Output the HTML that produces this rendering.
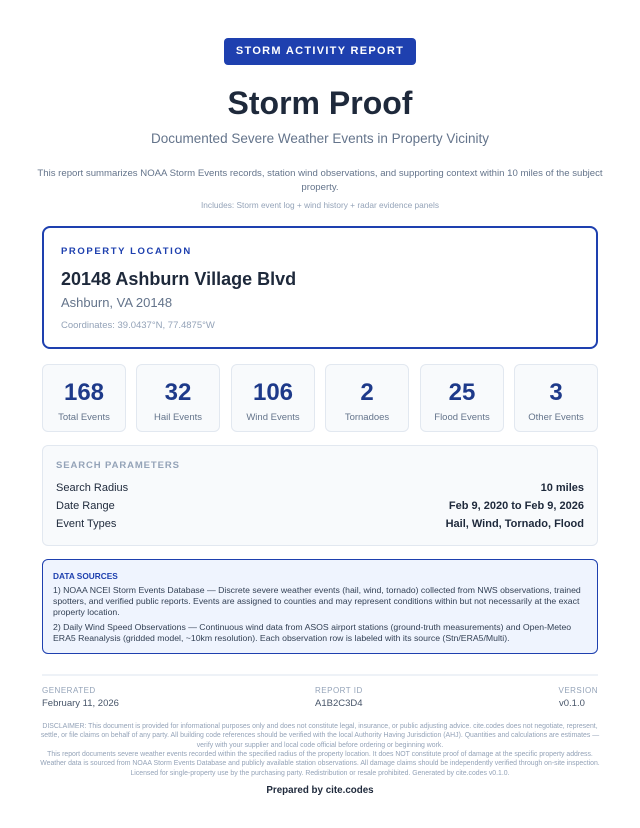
<!DOCTYPE html>
<html><head><meta charset="utf-8"><style>
*{margin:0;padding:0;box-sizing:border-box}
body{width:640px;height:828px;background:#fff;font-family:"Liberation Sans",sans-serif;position:relative;overflow:hidden;color:#1e293b}
.a{position:absolute}
.c{left:0;right:0;text-align:center}
.badge{left:224px;top:38px;width:192px;height:27px;background:#1e40af;border-radius:4px;color:#fff;font-weight:bold;font-size:11px;letter-spacing:1.3px;text-align:center;line-height:27px}
.prop{left:42px;top:226px;width:556px;height:123px;border:2px solid #1e40af;border-radius:8px}
.card{top:364px;width:84px;height:68px;border:1px solid #e2e8f0;border-radius:6px;background:#f8fafc;text-align:center}
.card b{display:block;font-size:24px;color:#1e3a8a;margin-top:14px;line-height:28px}
.card span{display:block;font-size:9.5px;color:#64748b;margin-top:5px}
.sp{left:42px;top:445px;width:556px;height:101px;border:1px solid #e2e8f0;border-radius:6px;background:#f8fafc}
.row{position:absolute;left:13px;right:13px;font-size:11px;color:#1e293b}
.row b{float:right}
.ds{left:42px;top:559px;width:556px;height:95px;border:1px solid #1e40af;border-radius:6px;background:#eff4fe;padding:11px 10px;font-size:8.7px;line-height:11px;color:#334155}
.fl{font-size:8px;color:#94a3b8;letter-spacing:.5px}
.fv{font-size:9.5px;color:#475569}
.dis{font-size:6.9px;color:#94a3b8;line-height:9.3px;text-align:center}
</style></head><body>
<div class="a badge">STORM ACTIVITY REPORT</div>
<div class="a c" style="top:85px;font-size:32px;font-weight:bold;color:#1e293b">Storm Proof</div>
<div class="a c" style="top:131px;font-size:13.5px;color:#64748b">Documented Severe Weather Events in Property Vicinity</div>
<div class="a c" style="top:167px;font-size:9.6px;color:#64748b;line-height:13.5px;padding:0 30px">This report summarizes NOAA Storm Events records, station wind observations, and supporting context within 10 miles of the subject property.</div>
<div class="a c" style="top:200px;font-size:8.3px;color:#94a3b8">Includes: Storm event log + wind history + radar evidence panels</div>
<div class="a prop">
 <div class="a" style="left:17px;top:18px;font-size:9.5px;font-weight:bold;color:#1e40af;letter-spacing:1.6px">PROPERTY LOCATION</div>
 <div class="a" style="left:17px;top:41px;font-size:18px;font-weight:bold;color:#1e293b">20148 Ashburn Village Blvd</div>
 <div class="a" style="left:17px;top:67px;font-size:13px;color:#64748b">Ashburn, VA 20148</div>
 <div class="a" style="left:17px;top:92px;font-size:9.5px;color:#94a3b8">Coordinates: 39.0437°N, 77.4875°W</div>
</div>
<div class="a card" style="left:42px"><b>168</b><span>Total Events</span></div>
<div class="a card" style="left:136px"><b>32</b><span>Hail Events</span></div>
<div class="a card" style="left:231px"><b>106</b><span>Wind Events</span></div>
<div class="a card" style="left:325px"><b>2</b><span>Tornadoes</span></div>
<div class="a card" style="left:420px"><b>25</b><span>Flood Events</span></div>
<div class="a card" style="left:514px"><b>3</b><span>Other Events</span></div>
<div class="a sp">
 <div class="a" style="left:13px;top:14px;font-size:9.5px;font-weight:bold;color:#94a3b8;letter-spacing:.9px">SEARCH PARAMETERS</div>
 <div class="row" style="top:36px">Search Radius<b>10 miles</b></div>
 <div class="row" style="top:54px">Date Range<b>Feb 9, 2020 to Feb 9, 2026</b></div>
 <div class="row" style="top:72px">Event Types<b>Hail, Wind, Tornado, Flood</b></div>
</div>
<div class="a ds">
 <div style="font-weight:bold;color:#1e40af;margin-bottom:3px;font-size:8.3px">DATA SOURCES</div>
 <div>1) NOAA NCEI Storm Events Database — Discrete severe weather events (hail, wind, tornado) collected from NWS observations, trained spotters, and verified public reports. Events are assigned to counties and may represent conditions within but not necessarily at the exact property location.</div>
 <div style="margin-top:4px">2) Daily Wind Speed Observations — Continuous wind data from ASOS airport stations (ground-truth measurements) and Open-Meteo ERA5 Reanalysis (gridded model, ~10km resolution). Each observation row is labeled with its source (Stn/ERA5/Multi).</div>
</div>
<div class="a" style="left:42px;top:674px;width:556px;height:2px;background:#eef2f7"></div>
<div class="a fl" style="left:42px;top:686px">GENERATED</div>
<div class="a fv" style="left:42px;top:698px">February 11, 2026</div>
<div class="a fl" style="left:315px;top:686px">REPORT ID</div>
<div class="a fv" style="left:315px;top:698px">A1B2C3D4</div>
<div class="a fl" style="right:42px;top:686px">VERSION</div>
<div class="a fv" style="left:559px;top:698px">v0.1.0</div>
<div class="a dis" style="left:36px;right:36px;top:722px">DISCLAIMER: This document is provided for informational purposes only and does not constitute legal, insurance, or public adjusting advice. cite.codes does not negotiate, represent, settle, or file claims on behalf of any party. All building code references should be verified with the local Authority Having Jurisdiction (AHJ). Quantities and calculations are estimates — verify with your supplier and local code official before ordering or beginning work.</div>
<div class="a dis" style="left:36px;right:36px;top:750px">This report documents severe weather events recorded within the specified radius of the property location. It does NOT constitute proof of damage at the specific property address. Weather data is sourced from NOAA Storm Events Database and publicly available station observations. All damage claims should be independently verified through on-site inspection.</div>
<div class="a dis c" style="top:769px">Licensed for single-property use by the purchasing party. Redistribution or resale prohibited. Generated by cite.codes v0.1.0.</div>
<div class="a c" style="top:785px;font-size:9.8px;font-weight:bold;color:#1e293b">Prepared by cite.codes</div>
</body></html>
